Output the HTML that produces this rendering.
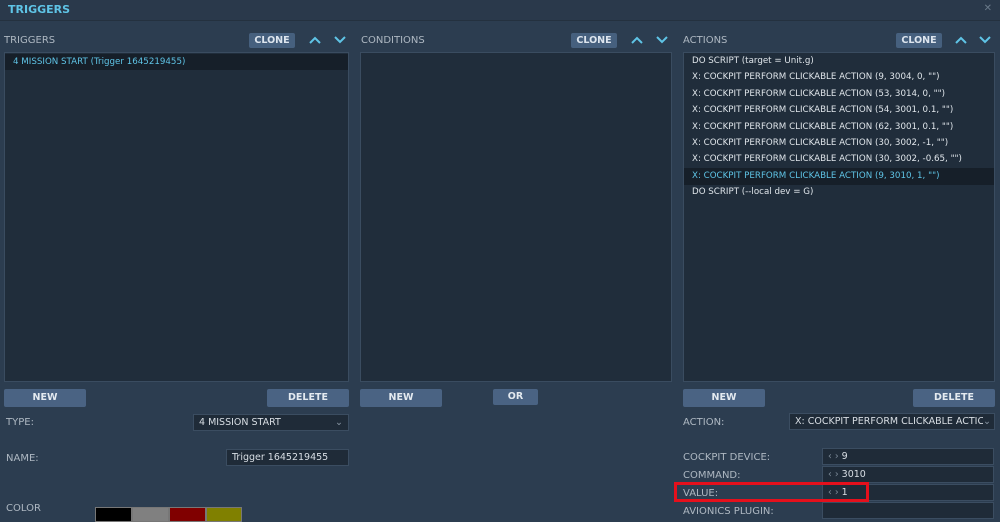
<!DOCTYPE html>
<html><head><style>
*{margin:0;padding:0;box-sizing:border-box}
body{width:1000px;height:522px;background:#2c3d50;font-family:"DejaVu Sans","Liberation Sans",sans-serif;color:#b8c2cc;position:relative;overflow:hidden;font-size:9px}
.a{position:absolute}
.title{left:0;top:0;width:1000px;height:21px;background:#2a394b;border-bottom:1px solid #24313f}
.title span{position:absolute;left:8px;top:3px;color:#5fc4e6;font-weight:bold;font-size:11px}
.lbl{font-size:10px;color:#aeb8c2}
.list{background:#202d3b;border:1px solid #3a4c60}
.btn{background:#4a6383;color:#e4eaf0;font-weight:bold;font-size:9.5px;text-align:center;border-radius:2px;line-height:18px;height:18px}
.clone{background:#46607e;color:#dde5ee;font-weight:bold;font-size:9.5px;text-align:center;line-height:15px;height:15px;width:46px;border-radius:2px}
.row{position:absolute;left:8px;font-size:8.7px;color:#dfe5ea;white-space:nowrap}
.field{background:#1f2b38;border:1px solid #3b4d61;color:#d8dee4;font-size:9.5px;padding-left:5px;line-height:15px;height:17px;white-space:nowrap;overflow:hidden}
svg.ch{position:absolute;width:12px;height:8px}
</style></head><body>
<div class="a title"><span>TRIGGERS</span><div class="a" style="right:8px;top:3px;color:#6a7a8a;font-size:10px">✕</div></div>

<div class="a lbl" style="left:4px;top:35px">TRIGGERS</div>
<div class="a clone" style="left:249px;top:33px">CLONE</div>
<svg class="ch" style="left:309px;top:36px"><polyline points="1,7 6,2 11,7" fill="none" stroke="#5fc4e6" stroke-width="2"/></svg>
<svg class="ch" style="left:334px;top:36px"><polyline points="1,1 6,6 11,1" fill="none" stroke="#5fc4e6" stroke-width="2"/></svg>
<div class="a list" style="left:4px;top:52px;width:345px;height:330px">
<div class="a" style="left:0;top:1px;width:343px;height:16px;background:#161f29"></div>
<div class="row" style="top:4px;color:#5fc4e6">4 MISSION START (Trigger 1645219455)</div></div>

<div class="a lbl" style="left:361px;top:35px">CONDITIONS</div>
<div class="a clone" style="left:571px;top:33px">CLONE</div>
<svg class="ch" style="left:631px;top:36px"><polyline points="1,7 6,2 11,7" fill="none" stroke="#5fc4e6" stroke-width="2"/></svg>
<svg class="ch" style="left:656px;top:36px"><polyline points="1,1 6,6 11,1" fill="none" stroke="#5fc4e6" stroke-width="2"/></svg>
<div class="a list" style="left:360px;top:52px;width:312px;height:330px"></div>

<div class="a lbl" style="left:683px;top:35px">ACTIONS</div>
<div class="a clone" style="left:896px;top:33px">CLONE</div>
<svg class="ch" style="left:955px;top:36px"><polyline points="1,7 6,2 11,7" fill="none" stroke="#5fc4e6" stroke-width="2"/></svg>
<svg class="ch" style="left:979px;top:36px"><polyline points="1,1 6,6 11,1" fill="none" stroke="#5fc4e6" stroke-width="2"/></svg>
<div class="a list" style="left:683px;top:52px;width:312px;height:330px">
<div class="row" style="top:3px">DO SCRIPT (target = Unit.g)</div>
<div class="row" style="top:19px">X: COCKPIT PERFORM CLICKABLE ACTION (9, 3004, 0, "")</div>
<div class="row" style="top:36px">X: COCKPIT PERFORM CLICKABLE ACTION (53, 3014, 0, "")</div>
<div class="row" style="top:52px">X: COCKPIT PERFORM CLICKABLE ACTION (54, 3001, 0.1, "")</div>
<div class="row" style="top:69px">X: COCKPIT PERFORM CLICKABLE ACTION (62, 3001, 0.1, "")</div>
<div class="row" style="top:85px">X: COCKPIT PERFORM CLICKABLE ACTION (30, 3002, -1, "")</div>
<div class="row" style="top:101px">X: COCKPIT PERFORM CLICKABLE ACTION (30, 3002, -0.65, "")</div>
<div class="a" style="left:0;top:115px;width:310px;height:17px;background:#161f29"></div>
<div class="row" style="top:118px;color:#5fc4e6">X: COCKPIT PERFORM CLICKABLE ACTION (9, 3010, 1, "")</div>
<div class="row" style="top:134px">DO SCRIPT (--local dev = G)</div>
</div>

<div class="a btn" style="left:4px;top:389px;width:82px">NEW</div>
<div class="a btn" style="left:267px;top:389px;width:82px">DELETE</div>
<div class="a btn" style="left:360px;top:389px;width:82px">NEW</div>
<div class="a btn" style="left:493px;top:389px;width:45px;height:16px;line-height:16px">OR</div>
<div class="a btn" style="left:683px;top:389px;width:82px">NEW</div>
<div class="a btn" style="left:913px;top:389px;width:82px">DELETE</div>

<div class="a lbl" style="left:6px;top:417px">TYPE:</div>
<div class="a field" style="left:193px;top:414px;width:156px">4 MISSION START<span style="position:absolute;right:5px;color:#8a98a6">⌄</span></div>
<div class="a lbl" style="left:6px;top:453px">NAME:</div>
<div class="a field" style="left:226px;top:449px;width:123px">Trigger 1645219455</div>
<div class="a lbl" style="left:6px;top:503px">COLOR</div>
<div class="a" style="left:95px;top:507px;width:37px;height:15px;background:#000;border:1px solid #777"></div>
<div class="a" style="left:132px;top:507px;width:37px;height:15px;background:#808080;border:1px solid #777"></div>
<div class="a" style="left:169px;top:507px;width:37px;height:15px;background:#800000;border:1px solid #777"></div>
<div class="a" style="left:206px;top:507px;width:36px;height:15px;background:#808000;border:1px solid #777"></div>

<div class="a lbl" style="left:683px;top:417px">ACTION:</div>
<div class="a field" style="left:789px;top:413px;width:206px">X: COCKPIT PERFORM CLICKABLE ACTIC<span style="position:absolute;right:3px;color:#8a98a6;background:#1f2b38">⌄</span></div>
<div class="a lbl" style="left:683px;top:452px">COCKPIT DEVICE:</div>
<div class="a field" style="left:822px;top:448px;width:172px"><span style="color:#7a8896">‹ ›</span> 9</div>
<div class="a lbl" style="left:683px;top:470px">COMMAND:</div>
<div class="a field" style="left:822px;top:466px;width:172px"><span style="color:#7a8896">‹ ›</span> 3010</div>
<div class="a lbl" style="left:683px;top:488px">VALUE:</div>
<div class="a field" style="left:822px;top:484px;width:172px"><span style="color:#7a8896">‹ ›</span> 1</div>
<div class="a" style="left:674px;top:482px;width:195px;height:20px;border:3px solid #e5101c"></div>
<div class="a lbl" style="left:683px;top:506px">AVIONICS PLUGIN:</div>
<div class="a field" style="left:822px;top:502px;width:172px"></div>
</body></html>
